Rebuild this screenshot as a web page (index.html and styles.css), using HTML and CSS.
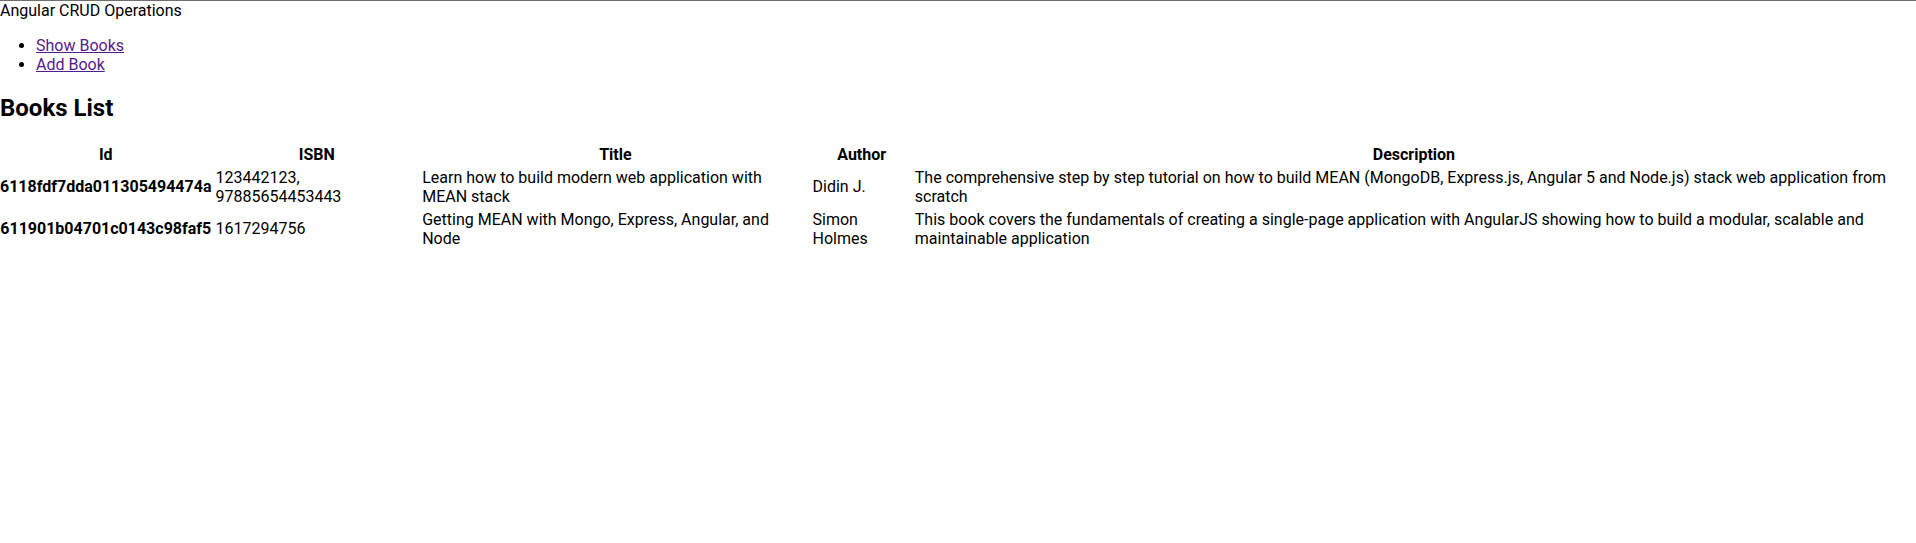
FILE: index.html
```html
<!DOCTYPE html>
<html>
<head>
<meta charset="utf-8">
<title>Angular CRUD Operations</title>
<link rel="stylesheet" href="styles.css">
</head>
<body>
<div class="app">
  <div class="brand">Angular CRUD Operations</div>
  <ul class="nav">
    <li><a href="#" class="nav-link">Show Books</a></li>
    <li><a href="#" class="nav-link">Add Book</a></li>
  </ul>
  <h2 class="page-title">Books List</h2>
  <table class="books">
    <thead>
      <tr>
        <th>Id</th>
        <th>ISBN</th>
        <th>Title</th>
        <th>Author</th>
        <th>Description</th>
      </tr>
    </thead>
    <tbody>
      <tr>
        <th class="row-id">6118fdf7dda011305494474a</th>
        <td>123442123, 97885654453443</td>
        <td>Learn how to build modern web application with MEAN stack</td>
        <td>Didin J.</td>
        <td>The comprehensive step by step tutorial on how to build MEAN (MongoDB, Express.js, Angular 5 and Node.js) stack web application from scratch</td>
      </tr>
      <tr>
        <th class="row-id">611901b04701c0143c98faf5</th>
        <td>1617294756</td>
        <td>Getting MEAN with Mongo, Express, Angular, and Node</td>
        <td>Simon Holmes</td>
        <td>This book covers the fundamentals of creating a single-page application with AngularJS showing how to build a modular, scalable and maintainable application</td>
      </tr>
    </tbody>
  </table>
</div>
</body>
</html>
```
FILE: styles.css
```css
html, body {
  margin: 0;
  padding: 0;
  background: #fff;
}
body {
  font-family: Roboto, "Liberation Sans", Arial, sans-serif;
  font-size: 16px;
  color: #000;
  border-top: 1px solid #6f6f6f;
  overflow-x: hidden;
}
.brand {
  line-height: normal;
}
.nav {
  margin: 16px 0;
  padding-left: 36px;
}
.nav-link {
  color: #551a8b;
  text-decoration: underline;
}
.page-title {
  font-size: 24px;
  font-weight: bold;
  margin: 0.83em 0;
}
.books {
  width: calc(100% + 3px);
  margin-left: -3px;
  border-spacing: 2px;
}
.books th,
.books td {
  padding: 1px;
  vertical-align: middle;
}
.books th {
  font-weight: bold;
  text-align: center;
}
.books td {
  text-align: left;
}
```
